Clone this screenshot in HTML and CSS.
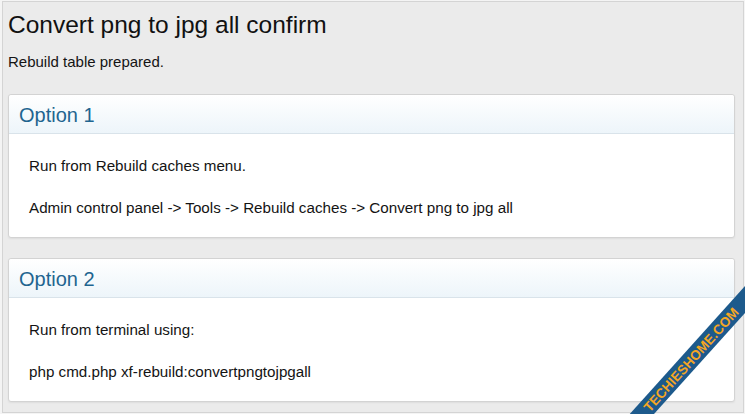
FILE: index.html
```html
<!DOCTYPE html>
<html lang="en">
<head>
    <meta charset="UTF-8">
    <meta name="viewport" content="width=device-width, initial-scale=1.0">
    <title>Convert png to jpg all confirm</title>
    <link rel="stylesheet" href="styles.css">
</head>
<body>
    <div class="page">
        <h1 class="page-title">Convert png to jpg all confirm</h1>
        <p class="page-note">Rebuild table prepared.</p>

        <div class="block">
            <h2 class="block-header">Option 1</h2>
            <div class="block-body">
                <p>Run from Rebuild caches menu.</p>
                <p>Admin control panel -&gt; Tools -&gt; Rebuild caches -&gt; Convert png to jpg all</p>
            </div>
        </div>

        <div class="block">
            <h2 class="block-header">Option 2</h2>
            <div class="block-body">
                <p>Run from terminal using:</p>
                <p>php cmd.php xf-rebuild:convertpngtojpgall</p>
            </div>
        </div>
    </div>
    <div class="ribbon-clip">
        <div class="ribbon"><span class="ribbon-text">TECHIESHOME.COM</span></div>
    </div>
</body>
</html>
```

FILE: styles.css
```css
* {
    box-sizing: border-box;
}
html, body {
    margin: 0;
    height: 100%;
    overflow: hidden;
}
body {
    font-family: "Liberation Sans", Arial, sans-serif;
    background-color: #f4f4f4;
    color: #141414;
    position: relative;
    padding: 1px 1px 1px 2px;
}
.page {
    height: 100%;
    border: 1px solid #d4d4d4;
    background-color: #ebebeb;
    padding: 9px 8px 0 5px;
    overflow: hidden;
}
.page-title {
    margin: 0;
    font-size: 24.5px;
    line-height: 28px;
    font-weight: normal;
    color: #111;
}
.page-note {
    margin: 14px 0 23px;
    font-size: 15px;
    line-height: 18px;
}
.block {
    background-color: #fff;
    border: 1px solid #d3d3d3;
    border-radius: 3px;
    box-shadow: 0 1px 2px rgba(0, 0, 0, 0.06);
    margin-bottom: 20px;
}
.block-header {
    margin: 0;
    padding: 8px 10px 6px;
    font-size: 20px;
    line-height: 24px;
    font-weight: normal;
    color: #1f6590;
    background: linear-gradient(to bottom, #ffffff, #edf5fa);
    border-bottom: 1px solid #d9e3ea;
    border-radius: 3px 3px 0 0;
}
.block-body {
    padding: 23px 20px 20px;
    font-size: 15.2px;
    line-height: 18px;
}
.block-body p {
    margin: 0 0 24px;
}
.block-body p:last-child {
    margin-bottom: 0;
}
.ribbon-clip {
    position: absolute;
    inset: 0;
    overflow: hidden;
    pointer-events: none;
}
.ribbon {
    position: absolute;
    left: 565px;
    top: 346px;
    width: 260px;
    height: 18px;
    padding-right: 12px;
    line-height: 18px;
    background-color: #1d5a8c;
    text-align: center;
    transform: rotate(-48deg);
}
.ribbon-text {
    color: #f5a623;
    font-weight: bold;
    font-size: 13.5px;
}
```
